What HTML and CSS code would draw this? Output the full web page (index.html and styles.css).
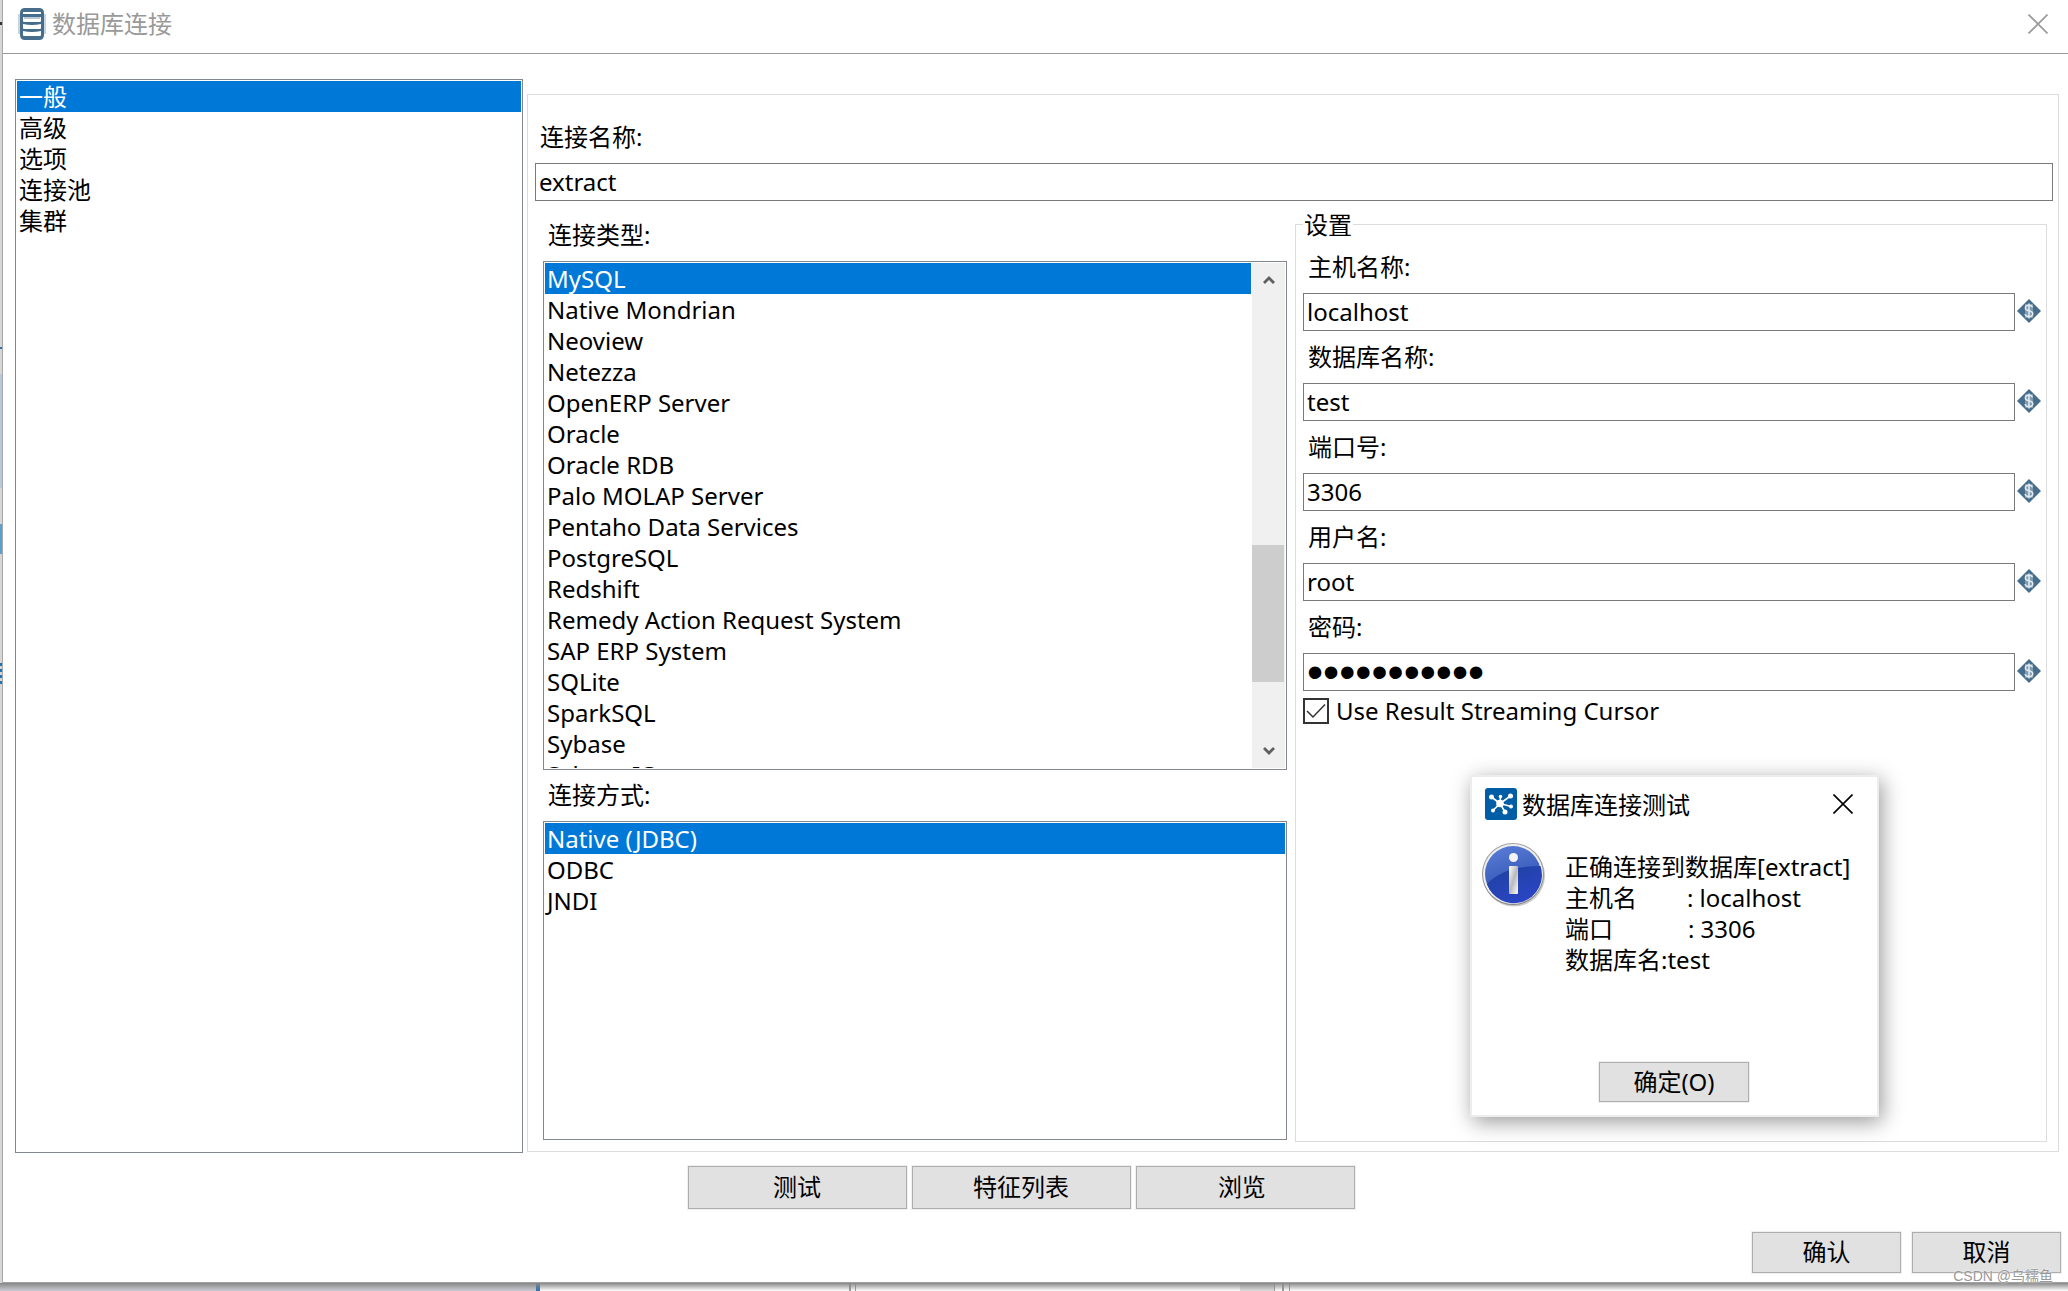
FILE: index.html
```html
<!DOCTYPE html>
<html lang="zh-CN">
<head>
<meta charset="utf-8">
<title>数据库连接</title>
<meta name="viewport" content="width=device-width, initial-scale=1">
<link rel="stylesheet" href="styles.css">
</head>
<body>
<svg width="0" height="0" class="defs" aria-hidden="true">
  <symbol id="variable" viewBox="0 0 24 24">
    <path d="M12 0 24 12 12 24 0 12z" fill="#476d8c"/>
    <path d="M8 5h8v14H8z" fill="#7f9bb0"/>
    <path d="M15.500 8.200C15 6.800 13.800 6.300 12 6.300c-2.200 0-3.600 1-3.600 2.700 0 3.800 7.400 1.900 7.400 5.700 0 1.900-1.600 2.900-3.800 2.900-2.100 0-3.600-.8-4-2.500M12 4.500v15" fill="none" stroke="#e3eaef" stroke-width="1.500"/>
  </symbol>
</svg>
<main class="window">
  <header class="titlebar">
    <svg class="db-icon" width="28" height="32" viewBox="0 0 28 32" aria-hidden="true">
      <path d="M2 5q0-5 5-5h14q5 0 5 5v22q0 5-5 5H7q-5 0-5-5z" fill="#476d8c"/>
      <path d="M1 6v20M27 6v20" stroke="#c9d5dd" stroke-width="2"/>
      <g fill="#fff"><rect x="5" y="4" width="18" height="2"/><path d="M5 9q9 2 18 0v4q0 1-1 1H6q-1 0-1-1z"/><path d="M5 16q9 2 18 0v4q0 1-1 1H6q-1 0-1-1z"/><path d="M5 23q9 2 18 0v4q0 1-1 1H6q-1 0-1-1z"/></g>
      <path d="M6 9h16v2H6z" fill="#b9c8d2"/>
    </svg>
    <h1 class="title">数据库连接</h1>
    <button class="close" type="button" aria-label="关闭"><svg width="20" height="20" viewBox="0 0 20 20"><path d="M0.500 0.500l19 19M19.500 0.500l-19 19" stroke="#999" stroke-width="1.600"/></svg></button>
  </header>

  <form class="form">
    <div class="content">
      <ul class="listbox" role="listbox" aria-label="类别">
        <li class="item selected" role="option" aria-selected="true">一般</li>
        <li class="item" role="option">高级</li>
        <li class="item" role="option">选项</li>
        <li class="item" role="option">连接池</li>
        <li class="item" role="option">集群</li>
      </ul>

      <section class="panel">
        <label class="label" for="conn-name">连接名称:</label>
        <input class="input" id="conn-name" type="text" value="extract">
        <div class="columns">
          <div class="types">
            <span class="label" id="type-label">连接类型:</span>
            <div class="listbox scroller">
              <ul class="items" role="listbox" aria-labelledby="type-label">
                <li class="item selected" role="option" aria-selected="true">MySQL</li>
                <li class="item" role="option">Native Mondrian</li>
                <li class="item" role="option">Neoview</li>
                <li class="item" role="option">Netezza</li>
                <li class="item" role="option">OpenERP Server</li>
                <li class="item" role="option">Oracle</li>
                <li class="item" role="option">Oracle RDB</li>
                <li class="item" role="option">Palo MOLAP Server</li>
                <li class="item" role="option">Pentaho Data Services</li>
                <li class="item" role="option">PostgreSQL</li>
                <li class="item" role="option">Redshift</li>
                <li class="item" role="option">Remedy Action Request System</li>
                <li class="item" role="option">SAP ERP System</li>
                <li class="item" role="option">SQLite</li>
                <li class="item" role="option">SparkSQL</li>
                <li class="item" role="option">Sybase</li>
                <li class="item" role="option">Sybase IQ</li>
              </ul>
              <div class="scrollbar" aria-hidden="true">
                <svg class="arrow" width="12" height="10" viewBox="0 0 12 10"><path d="M1 8l5-5 5 5" fill="none" stroke="#606060" stroke-width="2.800"/></svg>
                <div class="track"><div class="thumb"></div></div>
                <svg class="arrow" width="12" height="10" viewBox="0 0 12 10"><path d="M1 2l5 5 5-5" fill="none" stroke="#606060" stroke-width="2.800"/></svg>
              </div>
            </div>
            <span class="label" id="access-label">连接方式:</span>
            <ul class="listbox access" role="listbox" aria-labelledby="access-label">
              <li class="item selected" role="option" aria-selected="true">Native (JDBC)</li>
              <li class="item" role="option">ODBC</li>
              <li class="item" role="option">JNDI</li>
            </ul>
          </div>

          <fieldset class="settings">
            <legend>设置</legend>
            <div class="field">
              <label class="label" for="host">主机名称:</label>
              <div class="row"><input class="input" id="host" type="text" value="localhost"><svg width="24" height="24" aria-hidden="true"><use href="#variable"/></svg></div>
            </div>
            <div class="field">
              <label class="label" for="db">数据库名称:</label>
              <div class="row"><input class="input" id="db" type="text" value="test"><svg width="24" height="24" aria-hidden="true"><use href="#variable"/></svg></div>
            </div>
            <div class="field">
              <label class="label" for="port">端口号:</label>
              <div class="row"><input class="input" id="port" type="text" value="3306"><svg width="24" height="24" aria-hidden="true"><use href="#variable"/></svg></div>
            </div>
            <div class="field">
              <label class="label" for="user">用户名:</label>
              <div class="row"><input class="input" id="user" type="text" value="root"><svg width="24" height="24" aria-hidden="true"><use href="#variable"/></svg></div>
            </div>
            <div class="field">
              <label class="label" for="pass">密码:</label>
              <div class="row"><input class="input password" id="pass" type="password" autocomplete="off" value="password123"><svg width="24" height="24" aria-hidden="true"><use href="#variable"/></svg></div>
            </div>
            <label class="check"><input type="checkbox" checked>Use Result Streaming Cursor</label>
          </fieldset>
        </div>
      </section>
    </div>

    <div class="actions">
      <button class="btn" type="button">测试</button>
      <button class="btn" type="button">特征列表</button>
      <button class="btn" type="button">浏览&nbsp;</button>
    </div>
    <footer class="footer">
      <button class="btn" type="button">确认</button>
      <button class="btn" type="button">取消</button>
    </footer>
  </form>
</main>

<section class="dialog" role="dialog" aria-labelledby="dialog-title">
  <header class="dialog-head">
    <svg width="32" height="32" viewBox="0 0 32 32" aria-hidden="true">
      <rect width="32" height="32" rx="3" fill="#005da6"/>
      <path d="M15 15.500 6.500 9M15 15.500 15.500 9M15 15.500 25.500 8M15 15.500 26 18.500M15 15.500 20 24M15 15.500 8 22.500" stroke="#fff" stroke-width="1.600"/>
      <g fill="#fff"><circle cx="15" cy="15.500" r="3.800"/><circle cx="6.500" cy="9" r="2.500"/><circle cx="15.500" cy="8.500" r="1.800"/><circle cx="25.500" cy="8" r="2.500"/><circle cx="26" cy="18.500" r="2"/><circle cx="20" cy="24" r="2.500"/><circle cx="8" cy="22.500" r="2"/></g>
    </svg>
    <h2 class="title" id="dialog-title">数据库连接测试</h2>
    <button class="close" type="button" aria-label="关闭"><svg width="20" height="20" viewBox="0 0 20 20"><path d="M0.500 0.500l19 19M19.500 0.500l-19 19" stroke="#000" stroke-width="1.600"/></svg></button>
  </header>
  <div class="dialog-body">
    <svg width="64" height="64" viewBox="0 0 64 64" aria-hidden="true">
      <defs>
        <linearGradient id="ball" x1="0" y1="0" x2="0.300" y2="1"><stop offset="0" stop-color="#5b7fd8"/><stop offset="1" stop-color="#2a4cae"/></linearGradient>
        <linearGradient id="deep" x1="0" y1="0" x2="0.600" y2="1"><stop offset="0" stop-color="#1e419c"/><stop offset="1" stop-color="#2b45c6"/></linearGradient>
        <linearGradient id="ring" x1="0" y1="0" x2="0" y2="1"><stop offset="0" stop-color="#a5a5a5"/><stop offset="1" stop-color="#828282"/></linearGradient>
        <linearGradient id="stem" x1="0" y1="0" x2="1" y2="1"><stop offset="0" stop-color="#fff"/><stop offset="0.500" stop-color="#b9b9bd"/><stop offset="1" stop-color="#fff"/></linearGradient>
      </defs>
      <circle cx="32" cy="32.500" r="31" fill="#c9c9c9"/>
      <circle cx="31" cy="31" r="31" fill="url(#ring)"/>
      <circle cx="31" cy="31" r="30" fill="#efefef"/>
      <circle cx="31" cy="31" r="28" fill="url(#ball)"/>
      <path d="M5 41Q22 23 58.500 23A28 28 0 0 1 5 41z" fill="url(#deep)"/>
      <circle cx="31.500" cy="14.500" r="4.500" fill="#f4f4f6"/>
      <rect x="27" y="23" width="9" height="28" rx="1" fill="url(#stem)"/>
    </svg>
    <p class="message">正确连接到数据库[extract]
主机名        : localhost
端口            : 3306
数据库名:test</p>
  </div>
  <button class="btn" type="button">确定(O)</button>
</section>
<div class="watermark">CSDN @乌糯鱼</div>
</body>
</html>
```
FILE: styles.css
```css
* { box-sizing: border-box; }

body {
  position: relative;
  margin: 0;
  min-height: 100vh;
  padding: 0 0 8px 2px;
  font: 24px/31px "Noto Sans", "Noto Sans CJK SC", sans-serif;
  color: #000;
  /* slivers of the application window behind the dialog */
  background:
    linear-gradient(#888 0, transparent 8px) 0 100% / 100% 8px no-repeat,
    linear-gradient(#2f6fae, #2f6fae) 536px 100% / 4px 8px no-repeat,
    linear-gradient(#c9ccd3, #c9ccd3) 0 100% / 536px 8px no-repeat,
    linear-gradient(#999, #999) 849px 100% / 2px 8px no-repeat,
    linear-gradient(#999, #999) 855px 100% / 1px 8px no-repeat,
    linear-gradient(#ddd, #ddd) 1240px 100% / 34px 8px no-repeat,
    linear-gradient(#999, #999) 1274px 100% / 1px 8px no-repeat,
    linear-gradient(#999, #999) 1282px 100% / 2px 8px no-repeat,
    linear-gradient(#999, #999) 1289px 100% / 1px 8px no-repeat,
    linear-gradient(#333, #333) 0 22px / 2px 3px no-repeat,
    linear-gradient(#2f6fae, #2f6fae) 0 347px / 2px 2px no-repeat,
    linear-gradient(#b8c8d8, #b8c8d8) 0 374px / 2px 114px no-repeat,
    linear-gradient(#5a9fd0, #5a9fd0) 0 524px / 2px 30px no-repeat,
    repeating-linear-gradient(#1b75bb 0 3px, #d6d6d6 3px 6px) 0 663px / 2px 24px no-repeat,
    linear-gradient(90deg, #d6d6d6 0 2px, #fff 2px);
}

.defs { position: absolute; }

.window {
  display: flex;
  flex-direction: column;
  min-height: calc(100vh - 8px);
  border-left: 1px solid #a8a8a8;
  border-bottom: 1px solid #a0a0a0;
  background: #fff;
}

.titlebar {
  display: flex;
  align-items: center;
  gap: 6px;
  height: 54px;
  padding: 0 20px 6px 15px;
  border-bottom: 1px solid #9a9a9a;
}

.title {
  flex: 1;
  margin: 0;
  font-size: 24px;
  font-weight: 400;
}

.titlebar .title { color: #999; }

.close {
  display: flex;
  padding: 0;
  border: 0;
  background: none;
}

.form {
  flex: 1;
  display: flex;
  flex-direction: column;
  padding: 25px 7px 9px 12px;
}

.content {
  flex: 1;
  display: grid;
  grid-template-columns: minmax(0, 508fr) minmax(0, 1532fr);
  gap: 4px;
  margin-right: 2px;
}

.listbox {
  margin: 0;
  padding: 1px;
  border: 1px solid #828790;
  list-style: none;
  background: #fff;
}

.item {
  height: 31px;
  padding-left: 2px;
  white-space: nowrap;
}

.selected {
  color: #fff;
  background: #0078d7;
}

.panel {
  display: flex;
  flex-direction: column;
  margin: 15px 0 1px;
  padding: 26px 5px 9px 7px;
  border: 1px solid #dcdcdc;
}

.label {
  display: block;
  margin-bottom: 11px;
  padding-left: 5px;
}

.input {
  display: block;
  width: 100%;
  min-width: 0;
  height: 38px;
  margin: 0;
  padding: 0 3px 2px;
  border: 1px solid #7a7a7a;
  border-radius: 0;
  font: inherit;
  color: inherit;
  background: #fff;
}

.columns {
  flex: 1;
  display: grid;
  grid-template-columns: minmax(0, 744fr) minmax(0, 752fr);
  gap: 8px;
  margin: 8px 6px 0 8px;
}

.types {
  display: flex;
  flex-direction: column;
  padding: 10px 0 2px;
}

.scroller {
  display: flex;
  height: 509px;
  margin-bottom: 9px;
}

.items {
  flex: 1;
  margin: 0;
  padding: 0;
  overflow: hidden;
  list-style: none;
}

.scrollbar {
  display: flex;
  flex-direction: column;
  align-items: center;
  width: 34px;
  padding: 12px 0;
  border-left: 1px solid #fff;
  background: #f0f0f0;
}

.track {
  flex: 1;
  width: 100%;
  padding-top: 260px;
}

.thumb {
  height: 137px;
  margin-right: 1px;
  background: #cdcdcd;
}

.access { flex: 1; }

.settings {
  min-width: 0;
  margin: 0;
  padding: 11px 5px 0 7px;
  border: 1px solid #dcdcdc;
}

.settings legend { padding: 0 1px; }

.field { margin-bottom: 10px; }

.row {
  display: flex;
  align-items: center;
  gap: 2px;
}

.row svg {
  flex: none;
  margin-bottom: 2px;
}

.password {
  padding-bottom: 0;
  font-family: "Liberation Sans", sans-serif;
  font-size: 46px;
}

.check {
  display: flex;
  align-items: center;
  gap: 7px;
  margin-top: -6px;
}

.check input {
  appearance: none;
  width: 26px;
  height: 26px;
  margin: 0;
  border: 2px solid #333;
  background: url("data:image/svg+xml,%3Csvg xmlns='http://www.w3.org/2000/svg' viewBox='0 0 22 22'%3E%3Cpath d='M2 11l6 6L20 4.500' fill='none' stroke='%23333' stroke-width='1.500'/%3E%3C/svg%3E");
}

.btn {
  padding: 0 0 2px;
  border: 1px solid #adadad;
  outline: 1px solid #f0f0f0;
  font: inherit;
  color: inherit;
  background: #e1e1e1;
}

.actions {
  display: flex;
  justify-content: center;
  gap: 5px;
  margin: 13px 34px 23px 0;
}

.actions .btn { width: 219px; height: 43px; }

.footer {
  display: flex;
  justify-content: flex-end;
  gap: 11px;
}

.footer .btn { width: 149px; height: 41px; }

.dialog {
  position: absolute;
  top: 775px;
  right: 189px;
  display: flex;
  flex-direction: column;
  width: 409px;
  min-height: 342px;
  padding: 11px 14px 13px 13px;
  border: 2px solid #ededed;
  background: #fff;
  box-shadow: 3px 5px 20px rgba(0, 0, 0, 0.4);
}

.dialog-head {
  display: flex;
  align-items: center;
  gap: 5px;
  padding-right: 10px;
}

.dialog-body {
  display: flex;
  gap: 19px;
  margin: 23px 0 0 -3px;
}

.dialog-body svg { flex: none; }

.message {
  margin: 8px 0 0;
  white-space: pre;
}

.dialog .btn {
  align-self: center;
  width: 150px;
  height: 40px;
  margin-top: auto;
}

.watermark {
  position: absolute;
  right: 15px;
  bottom: 5px;
  font: 14px/20px "Liberation Sans", "Noto Sans CJK SC", sans-serif;
  color: #999;
  text-shadow: 0 0 2px #fff;
}
```
